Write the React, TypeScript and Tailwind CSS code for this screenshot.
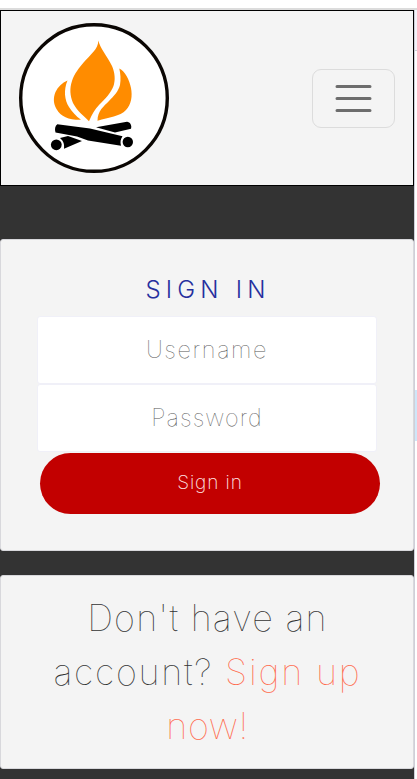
import React from "react";

function Logo() {
  return (
    <svg width="150" height="150" viewBox="19 23 150 150" aria-label="Campfire" className="shrink-0">
      <circle cx="94" cy="98" r="73.3" fill="#fff" stroke="#0a0603" strokeWidth="3.4" />
      <g fill="#ff8c00">
        <path d="M98.3 40.5C100 48 107 56 112 66C115 73 115.500 80 113.500 86C111 93 105 99 99 105C95 109 92 114 89 121.300C84 116 77 111 73 103C70 96 69.500 88 72 81C74 74 79 68 84 62C90 55 98.500 49 98.300 40.500Z" />
        <path d="M67.500 80.500C63.500 90 64.500 100 69 107C72 112 76 116 81 119.800C69 120 61 117 56.500 109C53.500 104 53 98 55.500 92C58 86.500 62 83 67.500 80.500Z" />
        <path d="M119.300 68.500C125 71 129.500 80 131 88C132.500 96 131.500 104 126 110C120 116.500 109 117 97.500 120.800C97.500 111 104 106 109 101C114 96 118.500 91 120 85C121 79 120.500 74 119.300 68.500Z" />
      </g>
      <g fill="#000">
        <path d="M57.300 124.200L90 128.500L122.500 136.200C120.500 139 120 142 121 145.700L88 140.500L77 136.500L55.500 132.500C54.500 129 55 126 57.300 124.200Z" />
        <path d="M96 127.300L127 121.800C130 122 132 125 131 128.700L115 132.500Z" />
        <path d="M60 138L68 136L82 141L64 148.700C64.500 144 63.500 141 60 138Z" />
        <circle cx="56.300" cy="144.800" r="5.400" />
        <circle cx="127.800" cy="142" r="5.200" />
      </g>
    </svg>
  );
}

function Header() {
  return (
    <header className="flex h-44 items-center justify-between border border-black bg-[#f4f4f4] pr-[18px] pl-[18px]">
      <Logo />
      <button aria-label="Menu" className="flex h-[59px] w-[83px] items-center justify-center rounded-[9px] border border-[#dcdcdc]">
        <svg width="40" height="30" viewBox="0 0 40 30" stroke="#6d6d6d" strokeWidth="3" strokeLinecap="round">
          <path d="M3 3.500H36M3 15.500H36M3 27.500H36" />
        </svg>
      </button>
    </header>
  );
}

const field =
  "block h-[68px] w-[340px] rounded-[3px] border border-[#f0f0f8] bg-white pb-[1px] text-center text-[23.500px] font-thin text-[#555] outline-none placeholder:text-[#555] placeholder:opacity-100";

export default function App() {
  return (
    <div className="flex h-[779px] w-[417px] flex-col overflow-hidden bg-white font-['Inter',sans-serif]">
      <div className="h-2 shrink-0" />
      <div className="h-0.5 shrink-0 bg-[#dcdcdc]" />
      <div className="flex min-h-0 flex-1">
        <div className="w-[414px] shrink-0 bg-[#333]">
          <Header />
          <form className="mt-[53px] h-[312px] rounded-[3px] border border-[#d8d8dc] bg-[#f4f4f4] pt-[32px] pl-[36px]">
            <h1 className="h-[44px] w-[340px] pl-[2px] text-center text-2xl leading-[36px] font-light tracking-[5.200px] text-[#262f9e]">
              SIGN IN
            </h1>
            <input className={field + " tracking-[1.600px]"} placeholder="Username" />
            <input type="text" className={field + " tracking-[1.100px]"} placeholder="Password" />
            <button type="button" className="mt-px ml-[3px] block h-[61px] w-[340px] rounded-full bg-[#c20000] text-[19px] font-extralight tracking-[0.900px] text-[#ffe4e4]">
              Sign in
            </button>
          </form>
          <p className="mt-6 h-[194px] rounded-[3px] border border-[#d8d8dc] bg-[#f4f4f4] pt-[15px] pl-px text-center text-[36px] leading-[54px] font-thin text-[#333]">
            <span className="tracking-[1.200px]">Don't have an</span>
            <br />
            <span className="tracking-[1.700px]">account? </span>
            <a className="text-[#ff6a4d]">
              <span className="tracking-[1.800px]">Sign up</span>
              <br />
              <span className="tracking-[0.600px]">now!</span>
            </a>
          </p>
        </div>
        <div className="flex flex-1 flex-col border-l border-[#cfcfd8]">
          <div className="h-[41px] border-b border-[#cfcfd8] bg-[#f4f4fa]" />
          <div className="mt-[339px] h-[51px] bg-[#cfe6f8]" />
        </div>
      </div>
    </div>
  );
}
